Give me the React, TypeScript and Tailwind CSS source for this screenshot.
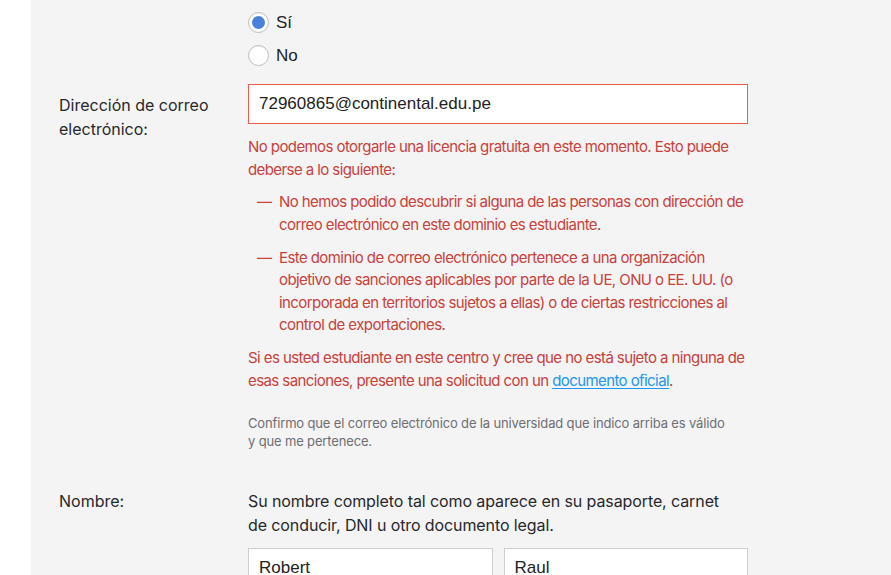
import React from 'react';

const FONT = { fontFamily: 'Inter, "Noto Sans", sans-serif' };
const INPUT_FONT = { fontFamily: '"Liberation Sans", Arial, sans-serif' };

const Radio: React.FC<{ label: string; checked?: boolean }> = ({ label, checked }) => (
  <label className="flex items-center h-[33px] gap-[7px] cursor-pointer">
    <span className="w-[21px] h-[21px] rounded-full border border-[#bdbdbd] bg-white flex items-center justify-center shadow-[inset_0_1px_1px_rgba(0,0,0,0.06)]">
      {checked && <span className="w-[13px] h-[13px] rounded-full bg-[#4a7fdb]" />}
    </span>
    <span className="text-[17px] text-[#222]" style={INPUT_FONT}>{label}</span>
  </label>
);

const Row: React.FC<{ label?: string; labelPad?: string; children: React.ReactNode }> = ({ label, labelPad = 'pt-0', children }) => (
  <div className="flex">
    <div className={`w-[189px] shrink-0 text-[16px] leading-[23.5px] text-[#27282c] ${labelPad}`}>{label}</div>
    <div className="w-[500px]">{children}</div>
  </div>
);

export default function App() {
  return (
    <div className="flex w-[891px] h-[575px] overflow-hidden bg-white" style={FONT}>
      <div className="w-[31px] shrink-0 bg-white" />
      <div className="flex-1 bg-[#f4f4f4] pl-[28px] pt-[6px]">
        <Row>
          <Radio label="Sí" checked />
          <Radio label="No" />
        </Row>

        <div className="mt-[12px]">
          <Row label="Dirección de correo electrónico:" labelPad="pt-[10px] pr-[30px]">
            <input
              readOnly
              value="72960865@continental.edu.pe"
              className="w-full h-[40px] border border-[#e8604c] bg-white px-[10px] text-[17px] text-[#222] outline-none"
              style={INPUT_FONT}
            />
            <div className="text-[15px] leading-[22.5px] tracking-[-0.58px] text-[#c8413b]">
              <p className="mt-[12px]">
                No podemos otorgarle una licencia gratuita en este momento. Esto puede deberse a lo siguiente:
              </p>
              <ul className="mt-[10px] flex flex-col gap-[10.5px]">
                <li className="flex">
                  <span className="w-[31px] shrink-0 pl-[9px]">—</span>
                  <span>No hemos podido descubrir si alguna de las personas con dirección de correo electrónico en este dominio es estudiante.</span>
                </li>
                <li className="flex">
                  <span className="w-[31px] shrink-0 pl-[9px]">—</span>
                  <span>Este dominio de correo electrónico pertenece a una organización objetivo de sanciones aplicables por parte de la UE, ONU o EE. UU. (o incorporada en territorios sujetos a ellas) o de ciertas restricciones al control de exportaciones.</span>
                </li>
              </ul>
              <p className="mt-[10.5px]">
                Si es usted estudiante en este centro y cree que no está sujeto a ninguna de esas sanciones, presente una solicitud con un{' '}
                <a href="#" className="text-[#2196f3] underline underline-offset-2">documento oficial</a>.
              </p>
            </div>
            <p className="mt-[22px] text-[13px] leading-[18px] tracking-[-0.15px] text-[#6e6e73] pr-[16px]">
              Confirmo que el correo electrónico de la universidad que indico arriba es válido y que me pertenece.
            </p>
          </Row>
        </div>

        <div className="mt-[40px]">
          <Row label="Nombre:">
            <p className="text-[16px] leading-[23.5px] tracking-[-0.1px] text-[#27282c] pr-[20px]">
              Su nombre completo tal como aparece en su pasaporte, carnet de conducir, DNI u otro documento legal.
            </p>
            <div className="grid grid-cols-2 gap-[11px] mt-[11px]">
              <input readOnly value="Robert" className="h-[40px] border border-[#cfcfcf] bg-white px-[10px] text-[17px] text-[#222] outline-none" style={INPUT_FONT} />
              <input readOnly value="Raul" className="h-[40px] border border-[#cfcfcf] bg-white px-[10px] text-[17px] text-[#222] outline-none" style={INPUT_FONT} />
            </div>
          </Row>
        </div>
      </div>
    </div>
  );
}
